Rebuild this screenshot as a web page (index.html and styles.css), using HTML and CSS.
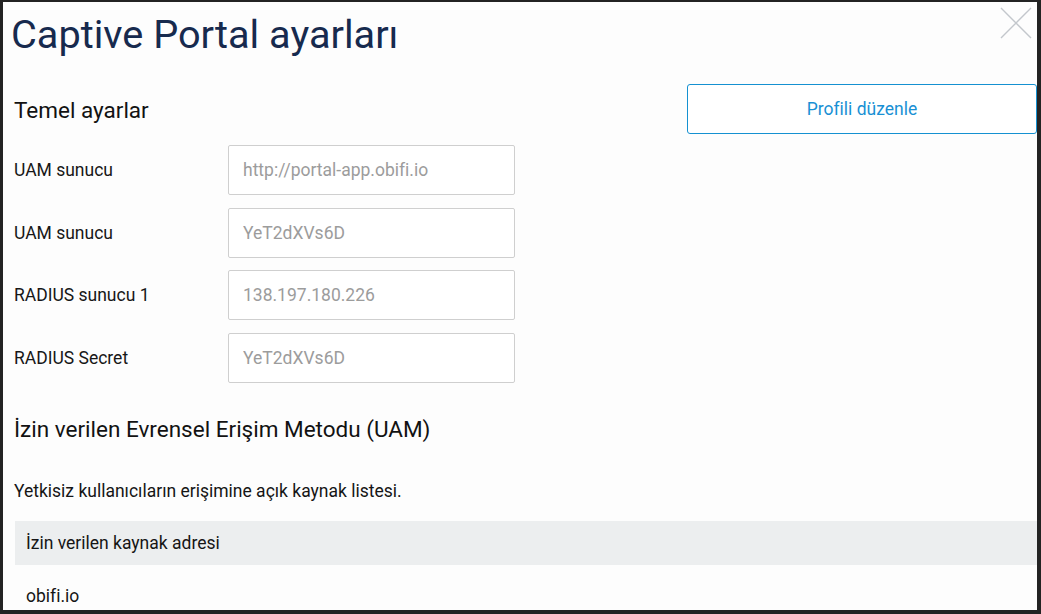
FILE: index.html
```html
<!DOCTYPE html>
<html lang="tr">
<head>
    <meta charset="UTF-8">
    <title>Captive Portal ayarları</title>
    <link rel="stylesheet" href="styles.css">
</head>
<body>
    <div class="modal">
        <a class="close" href="#" title="Kapat">
            <svg width="32" height="32" viewBox="0 0 32 32">
                <path d="M1 1L31 31M31 1L1 31" stroke="#c3c7cc" stroke-width="1.4" fill="none"/>
            </svg>
        </a>
        <h1 class="title">Captive Portal ayarları</h1>

        <div class="section-head">
            <h2>Temel ayarlar</h2>
            <button class="btn-outline">Profili düzenle</button>
        </div>

        <div class="form">
            <label>UAM sunucu</label>
            <input type="text" placeholder="http://portal-app.obifi.io">
            <label>UAM sunucu</label>
            <input type="text" placeholder="YeT2dXVs6D">
            <label>RADIUS sunucu 1</label>
            <input type="text" placeholder="138.197.180.226">
            <label>RADIUS Secret</label>
            <input type="text" placeholder="YeT2dXVs6D">
        </div>

        <h2 class="uam-title">İzin verilen Evrensel Erişim Metodu (UAM)</h2>
        <p class="note">Yetkisiz kullanıcıların erişimine açık kaynak listesi.</p>

        <table class="list">
            <thead>
                <tr><th>İzin verilen kaynak adresi</th></tr>
            </thead>
            <tbody>
                <tr><td>obifi.io</td></tr>
            </tbody>
        </table>
    </div>
</body>
</html>
```

FILE: styles.css
```css
*{
    margin: 0;
    padding: 0;
    box-sizing: border-box;
}
html,body{
    width: 100%;
    height: 100%;
}
body{
    background: #232323;
    font-family: Roboto, "Liberation Sans", Arial, sans-serif;
    color: #151515;
    overflow: hidden;
}
.modal{
    position: relative;
    margin: 2px 4px 0 3px;
    height: 608px;
    padding: 0 0 0 11px;
    background: #fdfdfd;
    overflow: hidden;
}
.close{
    position: absolute;
    top: 5px;
    right: 5px;
    display: block;
    width: 32px;
    height: 32px;
}
.title{
    margin: 8px 0 0 -3px;
    font-size: 39.7px;
    font-weight: normal;
    line-height: 50px;
    color: #172a4e;
}
h2{
    font-size: 22.5px;
    font-weight: normal;
    line-height: 28px;
    color: #121212;
}
.section-head{
    display: flex;
    justify-content: space-between;
    align-items: center;
    margin-top: 24px;
}
.section-head h2{
    padding-top: 2px;
}
.btn-outline{
    width: 350px;
    height: 50px;
    border: 1px solid #1591d1;
    border-radius: 3px;
    background: #fff;
    color: #1990d4;
    font-family: inherit;
    font-size: 17.5px;
    cursor: pointer;
}
.form{
    display: grid;
    grid-template-columns: 214px 287px;
    grid-auto-rows: 50px;
    row-gap: 12.67px;
    align-items: center;
    margin-top: 11px;
}
.form label{
    font-size: 17.5px;
    color: #171717;
}
.form input{
    height: 50px;
    padding: 0 14px;
    border: 1px solid #cfcfcf;
    border-radius: 2px;
    background: #fff;
    font-family: inherit;
    font-size: 17.5px;
    color: #555;
    outline: none;
}
.form input::placeholder{
    color: #9c9c9c;
}
.uam-title{
    margin-top: 32px;
}
.note{
    margin-top: 38px;
    font-size: 17.5px;
    line-height: 20px;
}
.list{
    width: calc(100% - 1px);
    margin: 20px 0 0 1px;
    border-collapse: collapse;
    font-size: 17.5px;
}
.list th{
    padding: 12px 11px;
    line-height: 20px;
    text-align: left;
    font-weight: normal;
    background: #eceeef;
}
.list td{
    padding: 21px 11px;
    line-height: 20px;
}
```
